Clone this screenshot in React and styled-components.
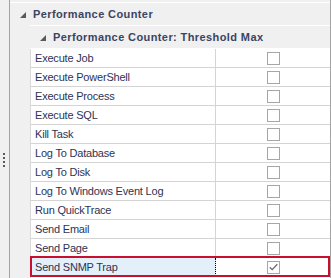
import React from "react";
import styled, { createGlobalStyle } from "styled-components";

const Global = createGlobalStyle`
  html, body { margin: 0; padding: 0; background: #f0f0f0; }
  body { font-family: "Liberation Sans", Arial, sans-serif; }
`;

const Page = styled.div`
  display: flex;
  width: 331px;
  height: 278px;
  overflow: hidden;
  background: #f0f0f0;
`;

const Splitter = styled.div`
  width: 10px;
  flex: none;
  border-right: 1px solid #a3a3a3;
  display: flex;
  flex-direction: column;
  align-items: flex-start;
  padding-top: 153px;
  padding-left: 3px;
  box-sizing: border-box;
  gap: 2px;
`;

const GripDot = styled.span`
  width: 2px;
  height: 2px;
  background: #5a5a5a;
`;

const Grid = styled.div`
  flex: 1;
  min-width: 0;
  padding-top: 2px;
  border-right: 1px solid #a3a3a3;
  background: #f0f0f0;
  display: flex;
  flex-direction: column;
`;

const Category = styled.div`
  display: flex;
  align-items: center;
  height: 23px;
  border-top: 1px solid #ffffff;
  padding-left: ${(p) => p.$indent}px;
  gap: 7px;
  font-size: 11px;
  font-weight: bold;
  letter-spacing: 0.4px;
  color: #3b4461;
  white-space: nowrap;
  box-sizing: border-box;
`;

const Triangle = styled.svg`
  width: 6px;
  height: 6px;
  flex: none;
  margin-top: 1px;
`;

const Body = styled.div`
  display: flex;
  flex: 1;
`;

const Indent = styled.div`
  width: 20px;
  flex: none;
`;

const Column = styled.div`
  flex: 1;
  display: flex;
  flex-direction: column;
`;

const SubHead = styled(Category)`
  height: 24px;
  border-bottom: 1px solid #ffffff;
`;

const Rows = styled.div`
  display: flex;
  flex-direction: column;
  background: #ffffff;
  border-left: 1px solid #d9d9d9;
  flex: 1;
`;

const Row = styled.div`
  position: relative;
  display: flex;
  height: 19px;
  border-bottom: 1px solid #d4d4d4;
  box-sizing: border-box;
  ${(p) =>
    p.$selected &&
    `
    &::after {
      content: "";
      position: absolute;
      left: -1px;
      right: 0;
      top: -2px;
      bottom: -1px;
      border: 2px solid #c8102e;
      pointer-events: none;
    }
  `}
`;

const NameCell = styled.div`
  width: 185px;
  flex: none;
  box-sizing: border-box;
  padding-left: 4px;
  display: flex;
  align-items: center;
  font-size: 11px;
  letter-spacing: -0.2px;
  color: #2d3355;
  white-space: nowrap;
  background: ${(p) => (p.$selected ? "#e3f0fa" : "#ffffff")};
  border-right: 1px ${(p) => (p.$selected ? "dotted #000000" : "solid #d4d4d4")};
`;

const ValueCell = styled.div`
  flex: 1;
  display: flex;
  align-items: center;
  justify-content: center;
`;

const Box = styled.div`
  width: 11px;
  height: 11px;
  border: 1px solid #a6a6a6;
  background: #ffffff;
  display: flex;
  align-items: center;
  justify-content: center;
`;

const items = [
  "Execute Job",
  "Execute PowerShell",
  "Execute Process",
  "Execute SQL",
  "Kill Task",
  "Log To Database",
  "Log To Disk",
  "Log To Windows Event Log",
  "Run QuickTrace",
  "Send Email",
  "Send Page",
  "Send SNMP Trap",
];

const Tri = () => (
  <Triangle viewBox="0 0 6 6">
    <polygon points="0,6 6,6 6,0" fill="#595959" />
  </Triangle>
);

export default function App() {
  return (
    <>
      <Global />
      <Page>
        <Splitter>
          <GripDot />
          <GripDot />
          <GripDot />
          <GripDot />
        </Splitter>
        <Grid>
          <Category $indent={10}>
            <Tri />
            Performance Counter
          </Category>
          <Body>
            <Indent />
            <Column>
              <SubHead $indent={10}>
                <Tri />
                Performance Counter: Threshold Max
              </SubHead>
              <Rows>
                {items.map((name) => {
                  const sel = name === "Send SNMP Trap";
                  return (
                    <Row key={name} $selected={sel}>
                      <NameCell $selected={sel}>{name}</NameCell>
                      <ValueCell>
                        <Box>
                          {sel && (
                            <svg width="9" height="8" viewBox="0 0 9 8">
                              <path d="M0.8 4.2 L3.2 6.6 L8.3 1.2" fill="none" stroke="#6b6b6b" strokeWidth="1.3" />
                            </svg>
                          )}
                        </Box>
                      </ValueCell>
                    </Row>
                  );
                })}
              </Rows>
            </Column>
          </Body>
        </Grid>
      </Page>
    </>
  );
}
